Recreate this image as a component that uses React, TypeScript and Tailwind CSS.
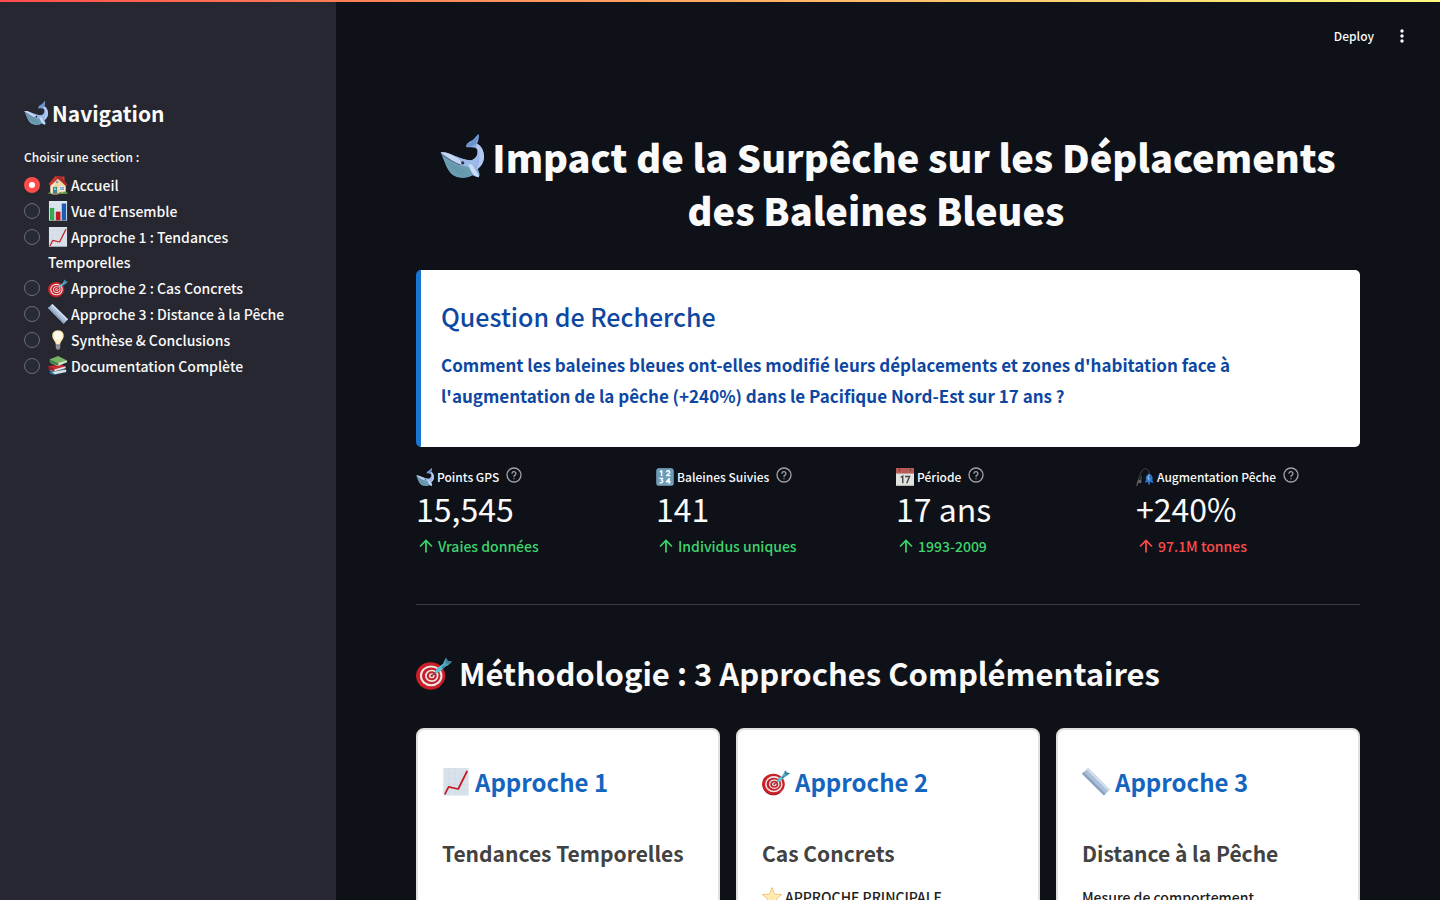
import { useState, type ReactNode } from 'react';

interface IconProps {
  className?: string;
}

function Emoji({ className = '', children }: IconProps & { children: ReactNode }) {
  return (
    <svg viewBox="0 0 64 64" aria-hidden="true" className={`inline-block shrink-0 ${className}`}>
      {children}
    </svg>
  );
}

function Whale({ className }: IconProps) {
  return (
    <Emoji className={className}>
      <path
        d="M1 27C8 25 15 29 22 32C30 35 38 39 46 38C53 36 56 28 54 23C52 18 45 21 38 19C38 13 43 11 47 9C51 6 53 3 56 0C57 4 56 10 54 14C60 17 64 24 64 33C64 41 60 47 55 51C57 56 59 60 56 63C52 62 49 61 47 60C40 65 25 65 17 58C9 51 7 39 1 27Z"
        fill="#86a9df"
      />
      <path d="M54 14C60 17 64 24 64 33C64 42 58 49 51 52C58 43 60 28 52 18Z" fill="#b3c9ef" />
      <path d="M22 32C30 35 38 39 46 38C53 36 56 30 54 23C60 34 55 46 47 54C46 48 39 47 31 46Z" fill="#9db9e8" />
      <path d="M3 32C14 37 22 44 32 46C40 47 46 49 47 54L46 60C38 65 25 64 17 58C10 51 8 41 3 32Z" fill="#6b9db0" />
      <path d="M1 27C9 25 20 31 29 38C31 41 32 43 31 45C21 43 12 34 1 27Z" fill="#c5d6ef" />
      <path d="M2 30C13 36 20 42 30 45" fill="none" stroke="#405575" strokeWidth="1.3" />
      <path d="M10 42L28 57M16 43L34 60M24 47L40 59" stroke="#5787a0" strokeWidth="1" />
      <path d="M42 44C46 42 50 49 52 53C55 57 58 61 56 63C49 61 43 54 42 44Z" fill="#c9def5" />
      <path d="M47 10C51 7 54 4 56 0C57 4 55 10 52 14L47 17C44 18 41 19 38 19C39 14 43 12 47 10Z" fill="#6b94cd" />
      <circle cx="33" cy="42" r="2.4" fill="#26354e" />
    </Emoji>
  );
}

function House({ className }: IconProps) {
  return (
    <Emoji className={className}>
      <path d="M43 5H53V23H43Z" fill="#b34c3c" />
      <path d="M8 30L29 10L57 31V59H8Z" fill="#efd6a5" />
      <path d="M8 30L22 17V59H8Z" fill="#f8e6c0" />
      <path d="M2 29L23 3L42 5L62 31L57 35L33 11L8 34Z" fill="#c9362d" />
      <path d="M23 3L42 5L62 31L57 34L33 10Z" fill="#a9282c" />
      <path d="M16 38H29V60H16Z" fill="#35858f" />
      <path d="M19 41H26V48H19Z" fill="#83c9d1" />
      <path d="M37 36H53V50H37Z" fill="#fff" />
      <path d="M39 38H51V48H39Z" fill="#6498d3" />
      <path d="M45 38V48M39 43H51" stroke="#dcebf8" strokeWidth="1.5" />
      <circle cx="29" cy="22" r="4" fill="#7ba5bd" />
      <path d="M0 60C3 54 8 54 12 60ZM33 60C37 52 43 54 45 57C51 52 60 52 64 60Z" fill="#5d9d46" />
      <path d="M13 59H33V63H13Z" fill="#b9926b" />
    </Emoji>
  );
}

function BarChart({ className }: IconProps) {
  return (
    <Emoji className={className}>
      <path d="M3 0H61V63H3Z" fill="#dce6ef" />
      <path d="M3 13H61M3 26H61M3 39H61M3 52H61" stroke="#bccbd8" strokeWidth="1" />
      <path d="M6 22H20V62H6Z" fill="#35a852" />
      <path d="M25 34H40V62H25Z" fill="#be1c22" />
      <path d="M44 8H58V62H44Z" fill="#1c5cb5" />
    </Emoji>
  );
}

function ChartUp({ className }: IconProps) {
  return (
    <Emoji className={className}>
      <path d="M3 0H61V63H3Z" fill="#d9e2eb" />
      <path d="M3 12H61M3 25H61M3 38H61M3 51H61M16 0V63M30 0V63M44 0V63" stroke="#ccd6e0" strokeWidth="1" />
      <path d="M7 59L15 43L37 48L57 8" fill="none" stroke="#c51b25" strokeWidth="4" strokeLinejoin="round" strokeLinecap="round" />
    </Emoji>
  );
}

function Target({ className }: IconProps) {
  return (
    <Emoji className={className}>
      <path d="M4 49C10 62 29 67 42 57L44 52Z" fill="#8d1c20" />
      <ellipse cx="26" cy="37" rx="26" ry="24" fill="#c9202a" />
      <ellipse cx="27" cy="37" rx="20" ry="18.5" fill="#f0e6e6" />
      <ellipse cx="27" cy="37" rx="16.5" ry="15" fill="#c2222b" />
      <ellipse cx="28" cy="37" rx="12" ry="11" fill="#f0e6e6" />
      <ellipse cx="28" cy="37" rx="9" ry="8" fill="#c2222b" />
      <ellipse cx="28" cy="37" rx="5" ry="4.5" fill="#f0e6e6" />
      <circle cx="28" cy="37" r="2.2" fill="#c2222b" />
      <path d="M28 37L47 21" stroke="#793e46" strokeWidth="2.5" />
      <path d="M34 31L37 24L50 14L54 19L43 29L36 33Z" fill="#5cc3d6" />
      <path d="M46 23L58 13" stroke="#356c99" strokeWidth="2.5" />
      <path d="M48 15L53 5L57 10L64 12L56 19L50 20Z" fill="#54a6bd" />
      <path d="M53 5L57 11L53 15ZM64 12L57 11L54 17Z" fill="#397895" />
    </Emoji>
  );
}

function Ruler({ className }: IconProps) {
  return (
    <Emoji className={className}>
      <path d="M0 13L14 0L64 49L50 63Z" fill="#adc0d9" />
      <path d="M0 13L4 9L54 59L50 63Z" fill="#8ba2bf" />
      <path d="M10 4L14 0L64 49L60 53Z" fill="#d0ddec" />
      <path d="M14 7L11 10M20 13L17 16M26 19L23 22M32 25L29 28M38 31L35 34M44 37L41 40M50 43L47 46M56 49L53 52" stroke="#9aaec8" strokeWidth="1" />
    </Emoji>
  );
}

function Bulb({ className }: IconProps) {
  return (
    <Emoji className={className}>
      <path d="M32 1C18 1 12 11 14 22C16 32 24 35 25 46H39C40 35 48 32 50 22C52 11 46 1 32 1Z" fill="#ffe6a6" />
      <path d="M32 4C22 4 17 12 19 21C21 30 27 34 28 44H36C37 34 43 30 45 21C47 12 42 4 32 4Z" fill="#fffdf0" />
      <path d="M29 44L27 31L32 34L37 31L35 44" fill="none" stroke="#efc77d" strokeWidth="1.2" />
      <path d="M25 45H39V56C39 60 36 63 32 63C28 63 25 60 25 56Z" fill="#a5a6aa" />
      <path d="M25 50H39M25 55H39M28 60H36" stroke="#606168" strokeWidth="1.5" />
    </Emoji>
  );
}

function Books({ className }: IconProps) {
  return (
    <Emoji className={className}>
      <path d="M5 45L48 39L60 51L21 61L6 57Z" fill="#246f9c" />
      <path d="M12 51L58 43V51L22 58Z" fill="#dce1de" />
      <path d="M2 32L43 26L58 37L20 49L5 46Z" fill="#c42d32" />
      <path d="M8 38L20 43L56 33V39L20 49L9 46Z" fill="#e3e4df" />
      <path d="M2 32L20 41L20 49L6 45C1 42 0 36 2 32Z" fill="#982529" />
      <path d="M6 10L32 0L61 14L33 28L10 20Z" fill="#76b464" />
      <path d="M6 10L32 22L61 14V20L32 32L8 22Z" fill="#d8e5d0" />
      <path d="M6 10L33 22V31L9 22C4 20 3 14 6 10Z" fill="#438247" />
    </Emoji>
  );
}

function Numbers({ className }: IconProps) {
  return (
    <Emoji className={className}>
      <rect x="1" y="1" width="62" height="62" rx="9" fill="#7fa6c0" />
      <rect x="3" y="2" width="58" height="55" rx="8" fill="#6d9cbb" />
      <g fill="none" stroke="#f5faff" strokeWidth="5" strokeLinecap="round" strokeLinejoin="round">
        <path d="M15 13L20 10V27" />
        <path d="M38 13C41 8 49 9 49 15C49 20 41 22 38 27H50" />
        <path d="M14 37H24L19 43C27 43 26 55 14 52" />
        <path d="M47 54V37L37 49H51" />
      </g>
    </Emoji>
  );
}

function Calendar({ className }: IconProps) {
  return (
    <Emoji className={className}>
      <path d="M0 0H64V63H0Z" fill="#e2e2e0" />
      <path d="M0 0H64V20H0Z" fill="#b85b55" />
      <path d="M12 3V12M52 3V12" stroke="#643a3b" strokeWidth="3" />
      <path d="M0 20H64" stroke="#cfcccc" strokeWidth="1" />
      <path d="M17 33L24 29V54M32 30H48L38 54" fill="none" stroke="#444647" strokeWidth="5" />
      <path d="M0 60H64V63H0Z" fill="#bfc1c1" />
    </Emoji>
  );
}

function FishingPole({ className }: IconProps) {
  return (
    <Emoji className={className}>
      <path d="M4 57C11 40 13 18 24 7C33-2 43 4 46 13L47 22" fill="none" stroke="#555961" strokeWidth="2.5" />
      <path d="M3 62L10 42" stroke="#4b4d55" strokeWidth="5" strokeLinecap="round" />
      <path d="M17 27L22 30L18 48L12 51Z" fill="#3f4149" />
      <circle cx="14" cy="48" r="6" fill="#626570" />
      <circle cx="6" cy="52" r="3" fill="#b74337" />
      <path d="M47 20C37 24 32 33 36 42L31 52L42 50L46 63L51 50L62 53L58 42C62 33 57 24 47 20Z" fill="#2d75c5" />
      <path d="M46 23C41 28 39 35 43 43L48 46V23Z" fill="#79b2e8" />
      <circle cx="50" cy="31" r="2" fill="#172f56" />
    </Emoji>
  );
}

function Star({ className }: IconProps) {
  return (
    <Emoji className={className}>
      <path d="M32 2L40 23L63 24L45 38L52 61L32 48L12 61L19 38L1 24L24 23Z" fill="#fff6d8" stroke="#edb44b" strokeWidth="2.5" strokeLinejoin="round" />
      <path d="M32 10L37 27H54L40 36L45 51L32 42L19 51L24 36L10 27H27Z" fill="#ffe9a6" />
    </Emoji>
  );
}

function HelpIcon() {
  return (
    <svg width="16" height="16" viewBox="0 0 24 24" fill="none" stroke="currentColor" strokeWidth="2" strokeLinecap="round" strokeLinejoin="round">
      <circle cx="12" cy="12" r="10.5" />
      <path d="M9 9.2a3 3 0 0 1 5.9 1c0 2-2.9 2.4-2.9 4" />
      <path d="M12 17.5h.01" />
    </svg>
  );
}

function ArrowUp() {
  return (
    <svg width="20" height="20" viewBox="0 0 20 20" fill="none" stroke="currentColor" strokeWidth="1.7" aria-hidden="true">
      <path d="M10 16.5V4.5M4 10.5L10 4.5L16 10.5" />
    </svg>
  );
}

const sections = [
  { icon: House, label: 'Accueil' },
  { icon: BarChart, label: "Vue d'Ensemble" },
  { icon: ChartUp, label: 'Approche 1 : Tendances Temporelles' },
  { icon: Target, label: 'Approche 2 : Cas Concrets' },
  { icon: Ruler, label: 'Approche 3 : Distance à la Pêche' },
  { icon: Bulb, label: 'Synthèse & Conclusions' },
  { icon: Books, label: 'Documentation Complète' },
];

const metrics = [
  { icon: Whale, label: 'Points GPS', value: '15,545', delta: 'Vraies données', color: 'text-[#3dd56d]' },
  { icon: Numbers, label: 'Baleines Suivies', value: '141', delta: 'Individus uniques', color: 'text-[#3dd56d]' },
  { icon: Calendar, label: 'Période', value: '17 ans', delta: '1993-2009', color: 'text-[#3dd56d]' },
  { icon: FishingPole, label: 'Augmentation Pêche', value: '+240%', delta: '97.1M tonnes', color: 'text-[#ff4b4b]' },
];

const approaches = [
  { icon: ChartUp, title: 'Approche 1', subtitle: 'Tendances Temporelles', note: null },
  {
    icon: Target,
    title: 'Approche 2',
    subtitle: 'Cas Concrets',
    note: (
      <>
        <Star className="size-5 align-[-4px] mr-[3px]" />
        APPROCHE PRINCIPALE
      </>
    ),
  },
  { icon: Ruler, title: 'Approche 3', subtitle: 'Distance à la Pêche', note: 'Mesure de comportement' },
];

function Sidebar() {
  const [current, setCurrent] = useState(0);

  return (
    <aside className="w-84 shrink-0 bg-[#262730] px-6 pt-[95px]">
      <h2 className="flex items-center gap-1 text-[21px] leading-9 font-bold">
        <Whale className="size-6" />
        Navigation
      </h2>
      <fieldset className="mt-4">
        <legend className="text-xs leading-5 font-medium">Choisir une section :</legend>
        <div className="mt-1.5 flex flex-col gap-px pr-6">
          {sections.map(({ icon: Icon, label }, i) => (
            <label key={label} className="flex items-start gap-2 text-sm leading-[25px] font-medium">
              <input
                type="radio"
                name="section"
                checked={current === i}
                onChange={() => setCurrent(i)}
                className="mt-1 size-4 shrink-0 appearance-none rounded-full border border-[#6d6e75] bg-[#262b34] checked:border-5 checked:border-[#ff4b4b] checked:bg-white"
              />
              <span>
                <Icon className="size-5 align-[-4px] mr-[3px]" />
                {label}
              </span>
            </label>
          ))}
        </div>
      </fieldset>
    </aside>
  );
}

export default function App() {
  return (
    <div className="relative flex h-screen overflow-hidden bg-[#0e1117] font-['Noto_Sans_CJK_SC','Noto_Sans',sans-serif] text-[#fafafa]">
      <div className="absolute inset-x-0 top-0 z-10 h-0.5 bg-linear-to-r from-[#ff4b4b] to-[#fffd80]" />
      <Sidebar />

      <div className="min-w-0 flex-1 overflow-y-auto [scrollbar-width:none]">
        <header className="flex h-18 items-center justify-end gap-[18px] pr-7">
          <button className="text-xs leading-5 font-medium">Deploy</button>
          <button aria-label="Menu">
            <svg width="20" height="20" viewBox="0 0 20 20" fill="currentColor">
              <circle cx="10" cy="5" r="1.7" />
              <circle cx="10" cy="10" r="1.7" />
              <circle cx="10" cy="15" r="1.7" />
            </svg>
          </button>
        </header>

        <main className="px-20 pt-[58px]">
          <h1 className="text-center text-[38px] leading-[53px] font-black">
            <Whale className="size-11 align-[-5px] mr-2" />
            Impact de la Surpêche sur les Déplacements des Baleines Bleues
            <span className="inline-block w-6" />
          </h1>

          <section className="mt-[34px] rounded-[5px] border-l-5 border-[#1976d2] bg-white px-5 pt-[29px] pb-9 text-[#0d47a1]">
            <h3 className="text-[25px] leading-[34px] font-medium">Question de Recherche</h3>
            <p className="mt-4 text-[17px] leading-[31px] font-bold">
              Comment les baleines bleues ont-elles modifié leurs déplacements et zones d'habitation face à
              l'augmentation de la pêche (+240%) dans le Pacifique Nord-Est sur 17 ans ?
            </p>
          </section>

          <section className="mt-5 grid grid-cols-4 gap-4">
            {metrics.map(({ icon: Icon, label, value, delta, color }) => (
              <div key={label}>
                <div className="flex h-5 items-center text-xs leading-5 font-medium">
                  <Icon className="size-[18px] mr-[3px]" />
                  {label}
                  <button aria-label={`Aide : ${label}`} className="ml-[7px] pb-1 text-[#a0a1a5]">
                    <HelpIcon />
                  </button>
                </div>
                <div className="text-[32px] leading-[42px]">{value}</div>
                <div className={`mt-[5px] flex h-6 items-center gap-0.5 text-sm leading-6 font-medium ${color}`}>
                  <ArrowUp />
                  {delta}
                </div>
              </div>
            ))}
          </section>

          <hr className="mt-[46px] border-[#393b41]" />

          <h2 className="mt-[46px] flex items-center gap-[7px] text-[31px] leading-[44px] font-bold">
            <Target className="size-9" />
            Méthodologie : 3 Approches Complémentaires
          </h2>

          <section className="mt-[33px] grid grid-cols-3 gap-4">
            {approaches.map(({ icon: Icon, title, subtitle, note }) => (
              <article key={title} className="min-h-72 rounded-lg border-2 border-[#e0e0e0] bg-white px-6 pt-[35px]">
                <h3 className="flex items-center gap-[5px] text-2xl leading-[34px] font-bold text-[#1565c0]">
                  <Icon className="size-7" />
                  {title}
                </h3>
                <h4 className="mt-[38px] text-[21px] leading-8 font-bold text-[#424242]">{subtitle}</h4>
                {note && <p className="mt-4 text-sm leading-[25px] font-medium text-[#212121]">{note}</p>}
              </article>
            ))}
          </section>
        </main>
      </div>
    </div>
  );
}
